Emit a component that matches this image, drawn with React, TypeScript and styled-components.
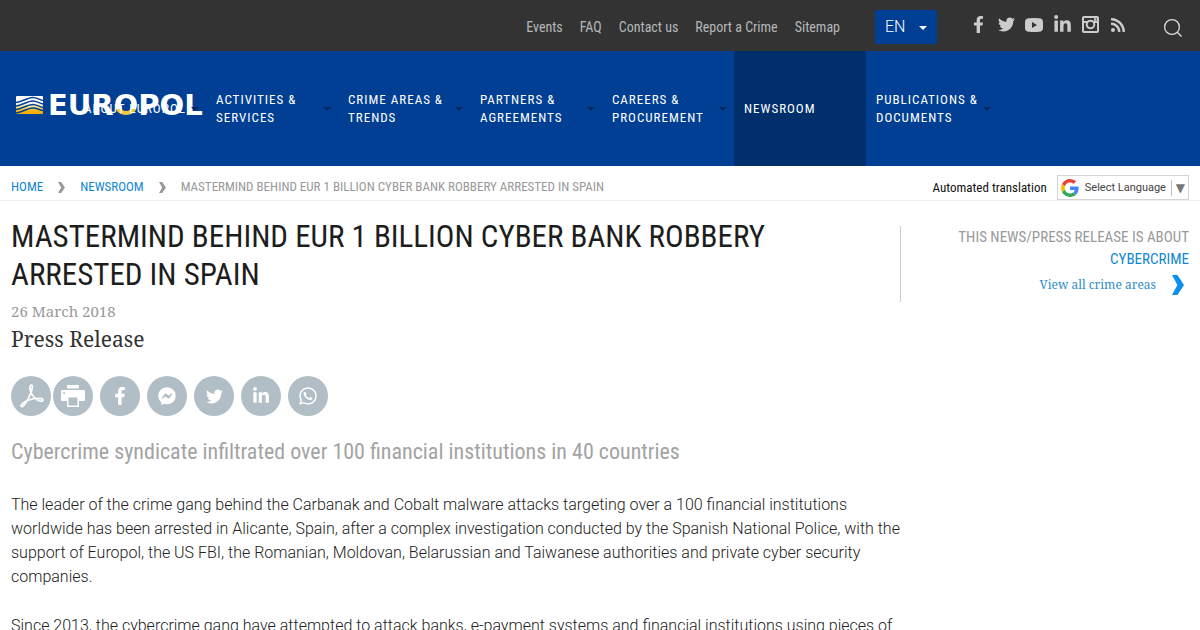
import React from "react";
import styled, { createGlobalStyle } from "styled-components";
import {
  FaFacebookF,
  FaTwitter,
  FaLinkedinIn,
  FaRss,
  FaFacebookMessenger,
  FaWhatsapp,
} from "react-icons/fa";

const condensed = `"Roboto Condensed", Roboto, "Liberation Sans Narrow", sans-serif`;
const sans = `Roboto, "Liberation Sans", sans-serif`;
const serif = `"Noto Serif", "Droid Serif", "DejaVu Serif", serif`;

const GlobalStyle = createGlobalStyle`
  * { box-sizing: border-box; }
  body { margin: 0; background: #fff; color: #222; font-family: ${sans}; }
  a { text-decoration: none; color: inherit; }
  button, select { font: inherit; color: inherit; border: 0; background: none; padding: 0; margin: 0; }
  ul, ol { list-style: none; margin: 0; padding: 0; }
  svg { display: block; }
`;

const TopBar = styled.div`
  display: flex;
  justify-content: flex-end;
  align-items: center;
  height: 51px;
  padding: 0 17px 0 12px;
  background: #333;
`;

const UtilityLinks = styled.nav`
  display: flex;
  gap: 17px;
  margin-top: 2px;
  font: 400 14px/20px ${condensed};
  color: #b5b8ba;
`;

const LanguageBox = styled.div`
  position: relative;
  width: 62px;
  height: 34px;
  margin: 3px 31px 0 35px;
  background: #003f93;
  color: #fff;
`;

const LanguageSelect = styled.select`
  appearance: none;
  width: 100%;
  height: 100%;
  padding: 0 10px;
  font: 300 16px/34px ${sans};
`;

const Caret = styled.span<{ $color: string }>`
  flex: none;
  width: 0;
  height: 0;
  border: 4px solid transparent;
  border-top-color: ${(p) => p.$color};
  border-bottom: 0;
`;

const LanguageCaret = styled(Caret)`
  position: absolute;
  right: 10px;
  top: 16px;
  pointer-events: none;
`;

const SocialList = styled.ul`
  display: flex;
  gap: 8px;
  margin-bottom: 2px;
  color: #ccc;
`;

const SocialLink = styled.a`
  display: flex;
  align-items: center;
  justify-content: center;
  width: 20px;
  height: 20px;
`;

const SearchButton = styled.button`
  margin: 4px 0 0 35px;
  color: #ddd;
`;

const Header = styled.header`
  position: relative;
  display: flex;
  height: 115px;
  padding-left: 74px;
  background: #003f93;
`;

const Logo = styled.a`
  position: absolute;
  left: 16px;
  top: 38px;
  display: flex;
  align-items: center;
  gap: 5px;
  color: #fff;
  font: 700 29px/32px "DejaVu Sans", sans-serif;
`;

const GoldLetter = styled.span`
  background: linear-gradient(#fff 62%, #f3c83c 62%);
  background-clip: text;
  color: transparent;
`;

const MainNav = styled.nav`
  position: relative;
  display: flex;
`;

const NavItem = styled.a<{ $active?: boolean }>`
  display: flex;
  align-items: center;
  justify-content: space-between;
  width: 132px;
  padding: 0 7px 0 10px;
  background: ${(p) => (p.$active ? "#002f6c" : "transparent")};
  color: #fff;
  font: 400 13px/18px ${condensed};
  letter-spacing: 1px;
  white-space: nowrap;
`;

const CrumbBar = styled.div`
  display: flex;
  justify-content: space-between;
  align-items: flex-end;
  height: 35px;
  padding: 0 11px;
  border-bottom: 1px solid #eee;
`;

const Crumbs = styled.ol`
  display: flex;
  align-items: center;
  height: 26px;
  font: 400 13px/16px ${condensed};
  color: #999;
`;

const Crumb = styled.li`
  display: flex;
  align-items: center;
  a { color: #0f87d2; }
  svg { margin: 0 15px; }
`;

const Translate = styled.div`
  display: flex;
  align-items: center;
  gap: 10px;
  font: 400 13px/18px ${condensed};
  color: #111;
`;

const TranslateBox = styled.div`
  display: flex;
  align-items: center;
  height: 25px;
  padding: 0 3px;
  border: 1px solid #d5d5d5;
  color: #666;
`;

const TranslateSelect = styled.select`
  appearance: none;
  width: 92px;
  padding: 0 0 0 6px;
  font: 400 11px/16px ${sans};
  color: #444;
`;

const TranslateArrow = styled.span`
  padding-left: 4px;
  border-left: 1px solid #bbb;
  font: 400 12px/16px "DejaVu Sans", sans-serif;
  color: #767676;
`;

const Page = styled.main`
  display: flex;
  align-items: flex-start;
  padding: 17px 11px 0;
`;

const Article = styled.article`
  flex: 1;
  min-width: 0;
`;

const Title = styled.h1`
  margin: 0;
  max-width: 800px;
  font: 400 31px/38px ${condensed};
  color: #1d1d1d;
`;

const DateLine = styled.p`
  margin: 7px 0 0;
  font: 400 15px/20px ${serif};
  color: #999;
`;

const Kind = styled.p`
  margin: 4px 0 0;
  font: 400 21px/28px ${serif};
  color: #333;
`;

const ShareList = styled.ul`
  display: flex;
  gap: 7px;
  margin: 23px 0 0;
  li:first-child { margin-right: -5px; }
`;

const ShareLink = styled.a`
  display: flex;
  align-items: center;
  justify-content: center;
  width: 40px;
  height: 40px;
  border-radius: 50%;
  background: #b1bec6;
  color: #fff;
`;

const Lead = styled.h2`
  margin: 20px 0 0;
  font: 400 22px/32px ${condensed};
  color: #a3a3a3;
`;

const Paragraph = styled.p`
  margin: 25px 0 0;
  font: 300 16px/24px ${sans};
  color: #222;
`;

const Aside = styled.aside`
  display: flex;
  flex-direction: column;
  align-items: flex-end;
  width: 289px;
  height: 76px;
  margin-top: 8px;
  border-left: 1px solid #ccc;
  font: 400 15px/22px ${condensed};
  color: #999;
`;

const TopicLink = styled.a`
  color: #0f87d2;
`;

const AreasLink = styled.a`
  display: flex;
  align-items: center;
  gap: 16px;
  margin-top: 4px;
  padding-right: 5px;
  font: 400 12px/22px ${serif};
  color: #2b8cc9;
`;

const Mark = () => (
  <svg width="27" height="18" viewBox="0 0 27 18" aria-hidden="true">
    <defs>
      <linearGradient id="mark" x1="0" y1="0" x2="0" y2="1">
        <stop offset="0.400" stopColor="#fff" />
        <stop offset="0.600" stopColor="#f3e08a" />
        <stop offset="0.850" stopColor="#f9b000" />
      </linearGradient>
    </defs>
    <rect width="27" height="18" rx="1" fill="url(#mark)" />
    <g fill="none" stroke="#003f93" strokeWidth="1.400">
      <path d="M0 6.500C6 6 11 1.500 17 1.500C21 1.500 23 4 27 4.500" />
      <path d="M0 10C6 9.500 11 5 17 5C21 5 23 7.500 27 8" />
      <path d="M0 13.500C6 13 11 8.500 17 8.500C21 8.500 23 11 27 11.500" />
      <path d="M0 17C6 16.500 11 12 17 12C21 12 23 14 27 14.500" />
    </g>
  </svg>
);

const YouTube = () => (
  <svg width="18" height="14" viewBox="0 0 18 14" aria-hidden="true">
    <path
      fill="currentColor"
      fillRule="evenodd"
      d="M4 0.300Q9 -0.200 14 0.300Q18 0.500 18 4V10Q18 13.500 14 13.700Q9 14.200 4 13.700Q0 13.500 0 10V4Q0 0.500 4 0.300ZM7 4V10L12 7Z"
    />
  </svg>
);

const Instagram = () => (
  <svg width="17" height="17" viewBox="0 0 17 17" fill="none" stroke="currentColor" aria-hidden="true">
    <rect x="1" y="1" width="15" height="15" rx="1" strokeWidth="2" />
    <path d="M1 6H5M12 6H16" strokeWidth="2" />
    <circle cx="8.500" cy="8.500" r="3.800" strokeWidth="2" />
    <path d="M12 3.500H14.500" strokeWidth="2.500" />
  </svg>
);

const Search = () => (
  <svg width="20" height="20" viewBox="0 0 20 20" fill="none" stroke="currentColor" strokeWidth="1.300" aria-hidden="true">
    <circle cx="9" cy="9" r="7.400" />
    <path d="M14.300 14.300L18.500 18.500" />
  </svg>
);

const Chevron = ({ w, h, color }: { w: number; h: number; color: string }) => (
  <svg width={w} height={h} viewBox="0 0 10 20" preserveAspectRatio="none" aria-hidden="true">
    <path d="M0 0H4.500L10 10L4.500 20H0L4.500 10Z" fill={color} />
  </svg>
);

const Google = () => (
  <svg width="18" height="18" viewBox="0 0 48 48" aria-hidden="true">
    <path fill="#EA4335" d="M24 9.500c3.540 0 6.710 1.220 9.210 3.600l6.850-6.850C35.900 2.380 30.470 0 24 0 14.620 0 6.510 5.380 2.560 13.220l7.980 6.190C12.430 13.720 17.740 9.500 24 9.500z" />
    <path fill="#4285F4" d="M46.980 24.550c0-1.570-.15-3.090-.38-4.550H24v9.020h12.940c-.58 2.960-2.260 5.480-4.780 7.180l7.730 6c4.510-4.180 7.090-10.360 7.090-17.650z" />
    <path fill="#FBBC05" d="M10.530 28.590c-.48-1.450-.76-2.990-.76-4.590s.27-3.140.76-4.590l-7.980-6.190C.92 16.460 0 20.120 0 24c0 3.880.92 7.540 2.560 10.780l7.970-6.190z" />
    <path fill="#34A853" d="M24 48c6.480 0 11.930-2.130 15.890-5.810l-7.730-6c-2.150 1.450-4.920 2.300-8.160 2.300-6.260 0-11.570-4.220-13.470-9.910l-7.980 6.190C6.510 42.620 14.620 48 24 48z" />
  </svg>
);

const Pdf = () => (
  <svg width="26" height="26" viewBox="0 0 26 26" fill="none" stroke="currentColor" strokeWidth="1.700" strokeLinejoin="round" aria-hidden="true">
    <path d="M13.500 2C11.200 2 11.800 6.500 13 9.500C14.200 12.500 18 17 22.500 18.200C25 18.800 26 16.300 23.500 15.600C19 14.600 12 16.200 8.500 18C5 19.700 2.500 22 3.200 23.300C4.300 25 8 20 10.500 15.200C13.300 9.700 15.800 2 13.500 2Z" />
  </svg>
);

const Printer = () => (
  <svg width="24" height="22" viewBox="0 0 24 22" aria-hidden="true">
    <rect x="6" y="0" width="12" height="3.500" fill="currentColor" />
    <rect x="0" y="5" width="24" height="11" rx="1" fill="currentColor" />
    <circle cx="3" cy="8" r="1" fill="#b1bec6" />
    <rect x="6.750" y="11.750" width="10.500" height="9.500" fill="#b1bec6" stroke="currentColor" strokeWidth="1.500" />
  </svg>
);

const utility = ["Events", "FAQ", "Contact us", "Report a Crime", "Sitemap"];

const social = [
  { name: "Facebook", icon: <FaFacebookF size={17} /> },
  { name: "Twitter", icon: <FaTwitter size={17} /> },
  { name: "YouTube", icon: <YouTube /> },
  { name: "LinkedIn", icon: <FaLinkedinIn size={19} /> },
  { name: "Instagram", icon: <Instagram /> },
  { name: "RSS", icon: <FaRss size={16} /> },
];

const sections = [
  { lines: ["ABOUT EUROPOL"], menu: true },
  { lines: ["ACTIVITIES &", "SERVICES"], menu: true },
  { lines: ["CRIME AREAS &", "TRENDS"], menu: true },
  { lines: ["PARTNERS &", "AGREEMENTS"], menu: true },
  { lines: ["CAREERS &", "PROCUREMENT"], menu: true },
  { lines: ["NEWSROOM"], active: true },
  { lines: ["PUBLICATIONS &", "DOCUMENTS"], menu: true },
];

const share = [
  { name: "PDF", icon: <Pdf /> },
  { name: "Print", icon: <Printer /> },
  { name: "Facebook", icon: <FaFacebookF size={18} /> },
  { name: "Messenger", icon: <FaFacebookMessenger size={18} /> },
  { name: "Twitter", icon: <FaTwitter size={17} /> },
  { name: "LinkedIn", icon: <FaLinkedinIn size={18} /> },
  { name: "WhatsApp", icon: <FaWhatsapp size={20} /> },
];

export default function App() {
  return (
    <>
      <GlobalStyle />
      <TopBar>
        <UtilityLinks>
          {utility.map((u) => (
            <a href="#" key={u}>{u}</a>
          ))}
        </UtilityLinks>
        <LanguageBox>
          <LanguageSelect aria-label="Language">
            <option>EN</option>
          </LanguageSelect>
          <LanguageCaret $color="#fff" />
        </LanguageBox>
        <SocialList>
          {social.map((s) => (
            <li key={s.name}>
              <SocialLink href="#" aria-label={s.name}>{s.icon}</SocialLink>
            </li>
          ))}
        </SocialList>
        <SearchButton aria-label="Search"><Search /></SearchButton>
      </TopBar>
      <Header>
        <Logo href="#" aria-label="Europol">
          <Mark />
          <span>EUR<GoldLetter>O</GoldLetter>POL</span>
        </Logo>
        <MainNav>
          {sections.map((s) => (
            <NavItem href="#" key={s.lines[0]} $active={s.active}>
              <span>
                {s.lines.map((l, i) => (
                  <React.Fragment key={l}>
                    {i > 0 && <br />}
                    {l}
                  </React.Fragment>
                ))}
              </span>
              {s.menu && <Caret $color="#00285c" />}
            </NavItem>
          ))}
        </MainNav>
      </Header>
      <CrumbBar>
        <Crumbs>
          <Crumb><a href="#">HOME</a><Chevron w={7} h={11} color="#999" /></Crumb>
          <Crumb><a href="#">NEWSROOM</a><Chevron w={7} h={11} color="#999" /></Crumb>
          <Crumb>MASTERMIND BEHIND EUR 1 BILLION CYBER BANK ROBBERY ARRESTED IN SPAIN</Crumb>
        </Crumbs>
        <Translate>
          <label htmlFor="translate">Automated translation</label>
          <TranslateBox>
            <Google />
            <TranslateSelect id="translate">
              <option>Select Language</option>
            </TranslateSelect>
            <TranslateArrow>▼</TranslateArrow>
          </TranslateBox>
        </Translate>
      </CrumbBar>
      <Page>
        <Article>
          <Title>MASTERMIND BEHIND EUR 1 BILLION CYBER BANK ROBBERY ARRESTED IN SPAIN</Title>
          <DateLine>26 March 2018</DateLine>
          <Kind>Press Release</Kind>
          <ShareList>
            {share.map((s) => (
              <li key={s.name}>
                <ShareLink href="#" aria-label={s.name}>{s.icon}</ShareLink>
              </li>
            ))}
          </ShareList>
          <Lead>Cybercrime syndicate infiltrated over 100 financial institutions in 40 countries</Lead>
          <Paragraph>
            The leader of the crime gang behind the Carbanak and Cobalt malware attacks targeting over a 100 financial
            institutions worldwide has been arrested in Alicante, Spain, after a complex investigation conducted by the
            Spanish National Police, with the support of Europol, the US FBI, the Romanian, Moldovan, Belarussian and
            Taiwanese authorities and private cyber security companies.
          </Paragraph>
          <Paragraph>
            Since 2013, the cybercrime gang have attempted to attack banks, e-payment systems and financial institutions
            using pieces of
          </Paragraph>
        </Article>
        <Aside>
          <span>THIS NEWS/PRESS RELEASE IS ABOUT</span>
          <TopicLink href="#">CYBERCRIME</TopicLink>
          <AreasLink href="#">
            View all crime areas
            <Chevron w={12} h={20} color="#0a8ff0" />
          </AreasLink>
        </Aside>
      </Page>
    </>
  );
}
